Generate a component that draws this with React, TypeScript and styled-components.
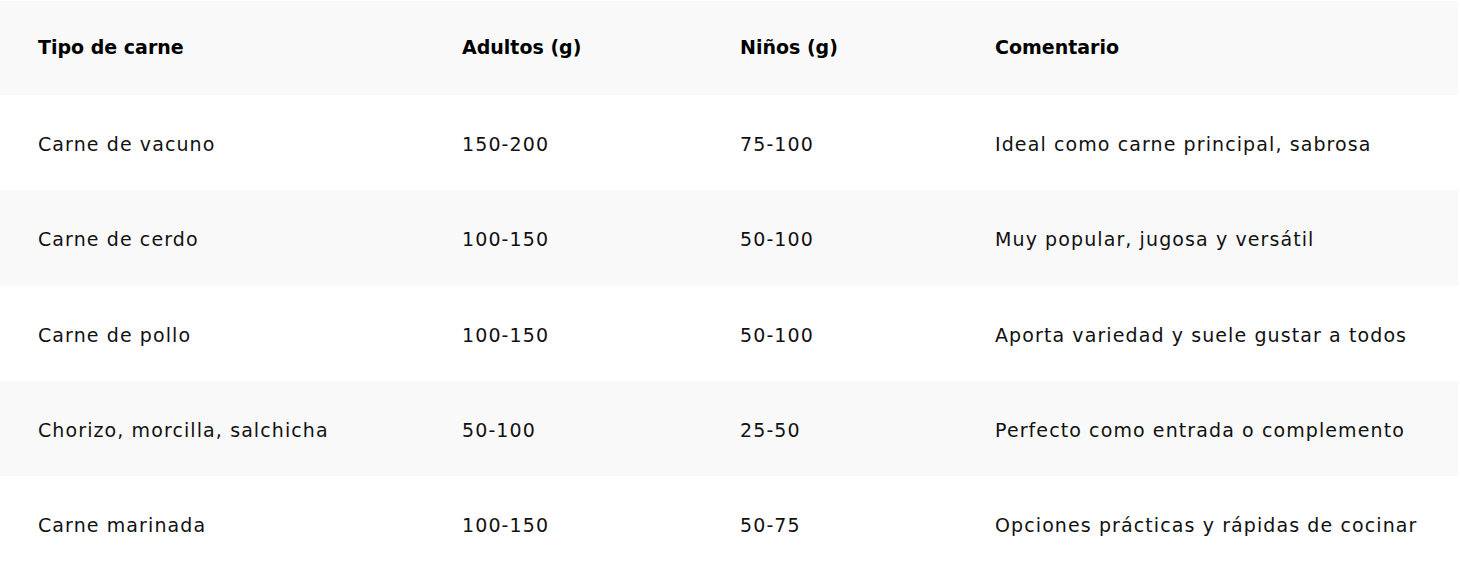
import React from "react";
import styled, { createGlobalStyle } from "styled-components";

const Global = createGlobalStyle`
  html, body { margin: 0; padding: 0; background: #ffffff; }
  body { font-family: "DejaVu Sans", "Noto Sans", sans-serif; color: #111111; }
`;

const Table = styled.table`
  width: 1458px;
  border-collapse: collapse;
  table-layout: fixed;
  margin-top: 1px;
`;

const Row = styled.tr<{ $shade: boolean; $h: number }>`
  height: ${(p) => p.$h}px;
  background: ${(p) => (p.$shade ? "#f9f9f9" : "#ffffff")};
`;

const Cell = styled.td`
  padding: 2px 0 0 38px;
  font-size: 19px;
  font-weight: 400;
  letter-spacing: 1.1px;
  color: #111111;
  white-space: nowrap;
  vertical-align: middle;
  text-align: left;
`;

const HeadCell = styled(Cell).attrs({ as: "th" })`
  padding: 0 0 3px 38px;
  font-size: 19px;
  font-weight: 700;
  letter-spacing: 0px;
  color: #000000;
`;

const cols = [424, 278, 255, 501];

const rows: string[][] = [
  ["Carne de vacuno", "150-200", "75-100", "Ideal como carne principal, sabrosa"],
  ["Carne de cerdo", "100-150", "50-100", "Muy popular, jugosa y versátil"],
  ["Carne de pollo", "100-150", "50-100", "Aporta variedad y suele gustar a todos"],
  ["Chorizo, morcilla, salchicha", "50-100", "25-50", "Perfecto como entrada o complemento"],
  ["Carne marinada", "100-150", "50-75", "Opciones prácticas y rápidas de cocinar"],
];

const heights = [95, 96, 95, 95, 95];

export default function App() {
  return (
    <>
      <Global />
      <Table>
        <colgroup>
          {cols.map((w, i) => (
            <col key={i} style={{ width: w }} />
          ))}
        </colgroup>
        <thead>
          <Row $shade $h={94}>
            {["Tipo de carne", "Adultos (g)", "Niños (g)", "Comentario"].map((t) => (
              <HeadCell key={t}>{t}</HeadCell>
            ))}
          </Row>
        </thead>
        <tbody>
          {rows.map((r, i) => (
            <Row key={i} $shade={i % 2 === 1} $h={heights[i]}>
              {r.map((c, j) => (
                <Cell key={j}>{c}</Cell>
              ))}
            </Row>
          ))}
        </tbody>
      </Table>
    </>
  );
}
